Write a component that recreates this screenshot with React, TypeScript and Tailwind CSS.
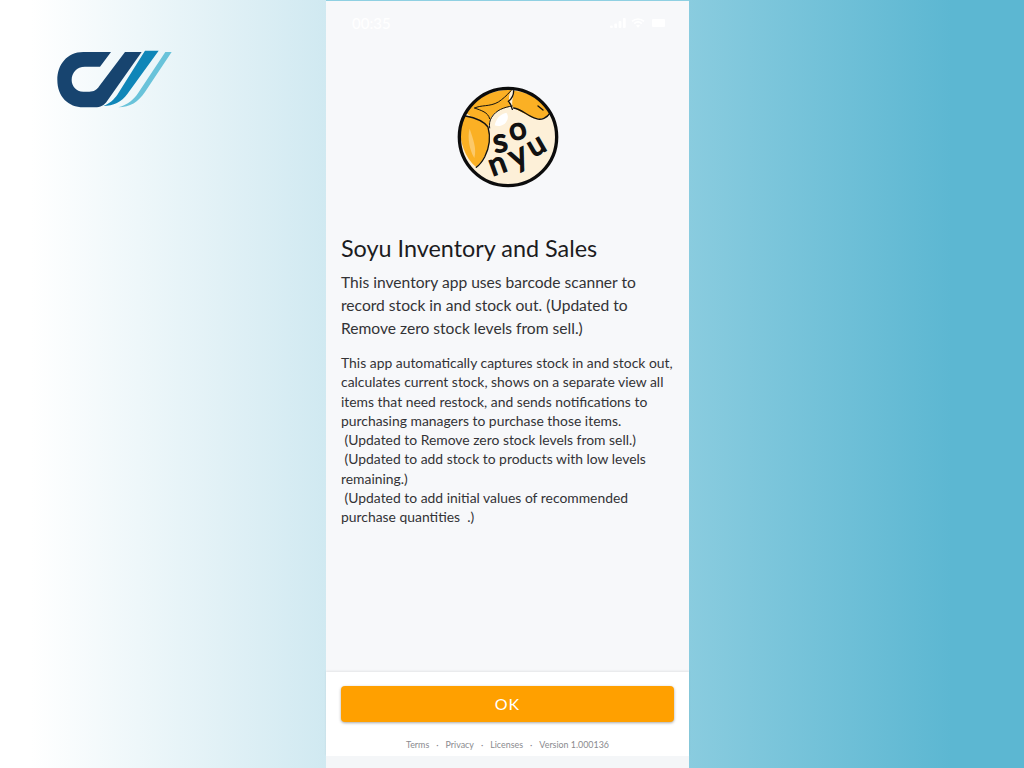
import React from 'react';

const CompanyLogo = () => (
  <svg width="160" height="100" viewBox="0 0 480 300" className="block">
    <path d="M243 66 L160 66 C110 66 82 105 82 150 C82 200 115 232 160 232 L195 232 C212 232 222 226 232 212 L335 66 L285 66 L208 168 C200 180 192 185 178 185 L160 185 C138 185 125 168 125 150 C125 128 140 110 165 110 L210 110 Z" fill="#17446f" />
    <path d="M345 62 L386 62 L292 192 C275 216 250 228 220 228 C240 220 252 208 262 194 Z" fill="#0f86b8" />
    <path d="M406 66 L425 66 L345 186 C325 216 300 232 265 232 C295 224 312 208 324 190 Z" fill="#69c3da" />
  </svg>
);

const letter = (ch: string, x: number, y: number, size: number, angle: number) => (
  <text
    x={x}
    y={y}
    fontSize={size}
    textAnchor="middle"
    transform={`rotate(${angle} ${x} ${y - size * 0.25})`}
  >
    {ch}
  </text>
);

// viewBox uses the coordinates of the 3x crop of the reference
const SoyuLogo = () => (
  <svg width="102" height="102" viewBox="52 52 306 306" className="block">
    <circle cx="205" cy="205" r="147" fill="#fdf0d8" />
    <path d="M62 172 C58 215 75 268 110 296 C125 280 138 262 148 232 C152 205 150 185 145 175 C130 160 110 150 92 142 L72 142 Z" fill="#fbb024" />
    <path d="M78 132 C105 88 155 62 217 63 C205 78 205 95 215 112 C195 118 170 122 155 145 C150 155 148 165 146 175 C130 160 110 150 92 142 Z" fill="#fbb024" />
    <path d="M222 66 C265 68 310 95 332 132 C320 152 295 155 272 144 C255 135 240 128 222 118 C212 108 222 85 222 66 Z" fill="#fbb024" />
    <path d="M90 180 C82 205 90 245 104 268 C112 240 100 210 90 180 Z" fill="#fcc96a" />
    <path d="M165 170 C170 148 180 138 200 132 C208 142 205 155 195 165 C185 172 175 174 165 170 Z" fill="#ffffff" />
    <g fill="none" stroke="#111" strokeLinecap="round" strokeLinejoin="round">
      <path d="M222 66 C222 85 210 95 206 98 C214 106 216 112 218 122" strokeWidth="4" />
      <path d="M218 112 C192 116 170 124 156 146 C150 156 148 166 150 178" strokeWidth="3" />
      <path d="M105 118 C125 108 150 115 176 100 C188 92 200 82 214 66" strokeWidth="3" />
      <path d="M105 118 C125 126 145 130 150 150" strokeWidth="3" />
      <path d="M222 118 C245 120 262 142 290 150 C305 155 322 148 332 132" strokeWidth="4" />
      <path d="M295 112 L310 124" strokeWidth="4" />
      <path d="M78 142 C100 146 130 155 145 175 C152 200 150 235 135 265 C128 278 118 290 110 296" strokeWidth="4" />
    </g>
    <circle cx="205" cy="205" r="146" fill="none" stroke="#0c0c0c" strokeWidth="10" />
    <g fontFamily="Lato, sans-serif" fill="#111" stroke="#111" strokeWidth="4.5" fontWeight="400">
      {letter('s', 182, 250, 100, -10)}
      {letter('o', 235, 212, 92, -15)}
      {letter('n', 175, 315, 92, -20)}
      {letter('y', 238, 292, 98, -25)}
      {letter('u', 292, 258, 90, -30)}
    </g>
  </svg>
);

const StatusIcons = () => (
  <div className="flex items-center gap-[5px]">
    <svg width="16" height="10" viewBox="0 0 16 10" fill="#fff">
      <rect x="0" y="7.5" width="2.8" height="2.5" rx="1" />
      <rect x="4.3" y="5.5" width="2.8" height="4.5" rx="1" />
      <rect x="8.6" y="3" width="2.8" height="7" rx="1" />
      <rect x="12.9" y="0" width="2.8" height="10" rx="1" />
    </svg>
    <svg width="14" height="10" viewBox="0 0 14 10" fill="none" stroke="#fff" strokeWidth="1.7">
      <path d="M1 3.4 C4.5 0.2 9.5 0.2 13 3.4" />
      <path d="M3.2 5.6 C5.4 3.7 8.6 3.7 10.8 5.6" />
      <path d="M5 7.4 C6.2 6.4 7.8 6.4 9 7.4 L7 9.8 Z" fill="#fff" stroke="none" />
    </svg>
    <div className="ml-[2px] h-[8px] w-[13px] rounded-[1px] bg-white" />
  </div>
);

export default function App() {
  return (
    <div className="flex h-[768px] w-[1024px] overflow-hidden bg-[linear-gradient(90deg,#ffffff_3%,#d0e9f1_32%,#8accdf_67%,#5cb7d2_93%)] font-['Lato',sans-serif]">
      <div className="w-[326px] shrink-0 pl-[30px] pt-[30px]">
        <CompanyLogo />
      </div>

      <div className="flex h-[768px] w-[363px] shrink-0 flex-col border-t border-[#8fd0e2] bg-[#f7f8fa]">
        <div className="flex h-[44px] shrink-0 items-start justify-between pl-[26px] pr-[24px] pt-[13px] text-white">
          <span className="text-[15px] font-medium leading-[18px]">00:35</span>
          <div className="pt-[4px]">
            <StatusIcons />
          </div>
        </div>

        <div className="flex flex-1 flex-col px-[15px]">
          <div className="mt-[41px] flex justify-center">
            <SoyuLogo />
          </div>
          <h1 className="mt-[45px] text-[23.4px] font-normal leading-[30px] text-[#1c1c1e]">
            Soyu Inventory and Sales
          </h1>
          <p className="mt-[8px] text-[15.6px] leading-[23px] text-[#333336]">
            This inventory app uses barcode scanner to record stock in and stock out. (Updated to Remove zero stock levels from sell.)
          </p>
          <p className="mt-[13px] whitespace-pre-line text-[13.9px] leading-[19.3px] text-[#333336]">
            {`This app automatically captures stock in and stock out, calculates current stock, shows on a separate view all items that need restock, and sends notifications to purchasing managers to purchase those items.
\u00a0(Updated to Remove zero stock levels from sell.)
\u00a0(Updated to add stock to products with low levels remaining.)
\u00a0(Updated to add initial values of recommended purchase quantities \u00a0.)`}
          </p>
        </div>

        <div className="h-[84px] shrink-0 bg-white px-[15px] pt-[14px] shadow-[0_-1px_2px_rgba(0,0,0,0.08)]">
          <button className="flex h-[36px] w-full items-center justify-center rounded-[4px] bg-[#ffa000] text-[16px] tracking-[1px] text-white shadow-[0_1px_3px_rgba(0,0,0,0.35)]">
            OK
          </button>
          <div className="mt-[17px] flex justify-center gap-[7px] text-[8.9px] leading-[12px] text-[#8a8a8e]">
            <span>Terms</span>
            <span>·</span>
            <span>Privacy</span>
            <span>·</span>
            <span>Licenses</span>
            <span>·</span>
            <span>Version 1.000136</span>
          </div>
        </div>
        <div className="h-[12px] shrink-0 bg-[#f4f6f8]" />
      </div>

      <div className="flex-1" />
    </div>
  );
}
